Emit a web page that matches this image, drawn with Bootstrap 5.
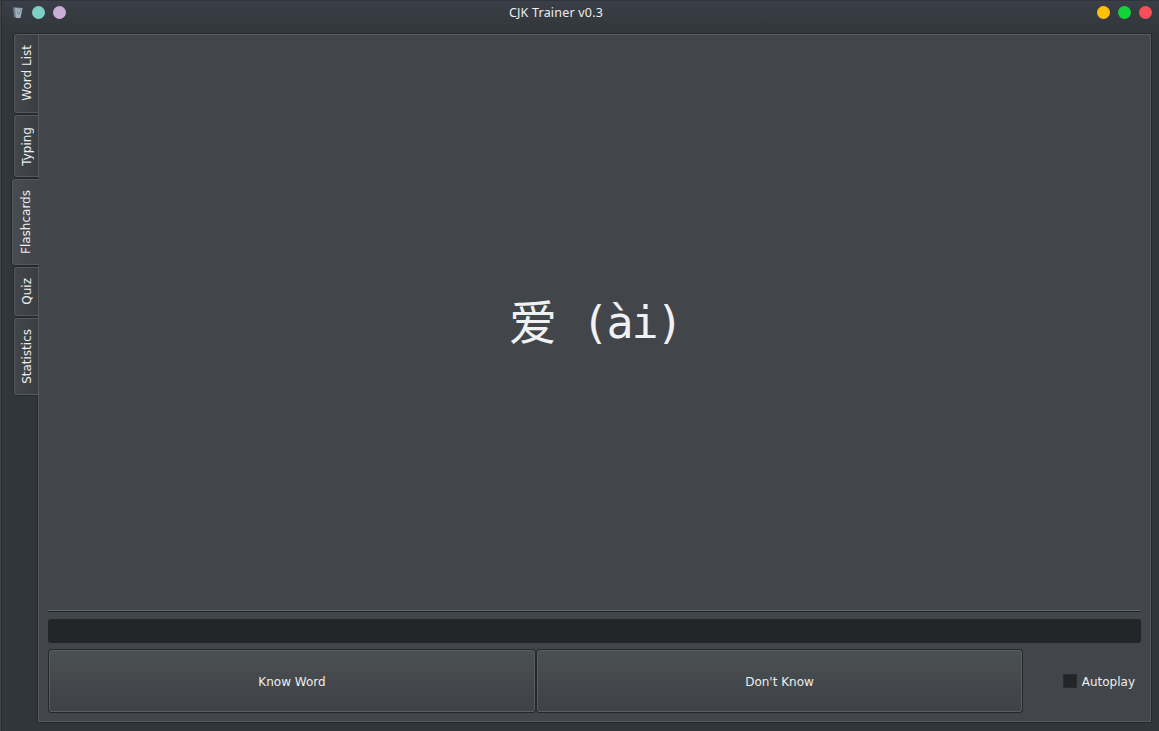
<!DOCTYPE html>
<html lang="en">
<head>
<meta charset="utf-8">
<meta name="viewport" content="width=device-width, initial-scale=1">
<title>CJK Trainer v0.3</title>
<link href="https://cdn.jsdelivr.net/npm/bootstrap@5.3.0/dist/css/bootstrap.min.css" rel="stylesheet">
<style>
body{height:100vh;background:#31363a linear-gradient(#3a3f48,#31363a) 0 0/100% 34px no-repeat;color:#eceeef;font:12px/16px "DejaVu Sans",sans-serif;border-left:1px solid #454545;box-shadow:inset 1px 0 #292d30}
.titlebar{height:25px;padding:0 7px 0 11px;border-top:1px solid #30343b}
.app-title{font:12.5px/20px "Noto Sans",sans-serif;letter-spacing:.2px;margin-left:-51px}
.dot{width:13px;height:13px;border-radius:50%;flex-shrink:0}
.workspace{padding:9px 8px 9px 11px}
.side-tabs{width:26px;z-index:1;gap:2px}
.side-tab{width:24px;margin-left:2px;border:1px solid #55595c;border-right:0;border-radius:3px 0 0 3px;background:linear-gradient(90deg,#42464a,#3a3e42);box-shadow:-1px 0 #262a2d,0 1px #262a2d,0 -1px #262a2d;color:#eceeef;padding:0;display:flex;align-items:center;justify-content:center}
.side-tab span{writing-mode:vertical-rl;transform:rotate(180deg);white-space:nowrap;line-height:16px;margin-left:1px}
.side-tab:first-child span{margin-bottom:1px}
.side-tab.active{width:27px;margin-left:0;background:linear-gradient(90deg,#474c50,#424549)}
.side-tab.active span{margin:0 1px 0 0}
.panel{border:1px solid #585c5f;background:#424549;box-shadow:0 0 0 1px #25292c;padding:0 9px 8px}
.word{font:48px/70px "Noto Sans CJK SC",sans-serif;color:#eff1f2;white-space:pre;padding:0 0 8px 1px}
.reading{font-family:"DejaVu Sans Mono",monospace;font-size:45px;letter-spacing:-2.3px;line-height:1;vertical-align:2px}
.divider{height:2px;background:#5d6c7b;border-bottom:1px solid #1e2328}
.answer{height:24px;border:0;border-radius:3px;background:#222628;margin:7px 0 6px;outline:0}
.choice{height:62px;border:1px solid #5a5e60;border-radius:3px;background:linear-gradient(#4b5053,#3e4145);box-shadow:0 0 0 1px #24282b;color:#eceeef;font-size:12px;padding:2px 0 0;width:485px}
.choice:first-child{width:486px}
.check{appearance:none;width:14px;height:14px;background:#222628;border:1px solid #292d2f;margin:0}
</style>
</head>
<body class="d-flex flex-column overflow-hidden">
<header class="titlebar d-flex align-items-center flex-shrink-0">
  <div class="d-flex align-items-center flex-shrink-0" style="margin-top:-1px">
    <svg width="12" height="13" viewBox="0 0 12 13"><path d="M1 1l3 1 1 10-3-1z" fill="#6f818d"/><path d="M3 1.5l7.500.5L8.500 12H4z" fill="#9eb1bd"/><path d="M6 3h3l-1 3H6zM5 7l3 1" fill="#c5d2dc" stroke="#607482" stroke-width=".7"/></svg>
    <span class="dot" style="background:#7ed0c7;margin-left:8px"></span>
    <span class="dot" style="background:#cbaed5;margin-left:8px"></span>
  </div>
  <div class="app-title flex-fill text-center">CJK Trainer v0.3</div>
  <div class="d-flex flex-shrink-0" style="gap:8px;margin-top:-1px">
    <span class="dot" style="background:#ffc107"></span><span class="dot" style="background:#12d438"></span><span class="dot" style="background:#f74e57"></span>
  </div>
</header>
<main class="workspace d-flex flex-fill">
  <nav class="side-tabs d-flex flex-column flex-shrink-0">
    <button class="side-tab" style="height:79px"><span>Word List</span></button>
    <button class="side-tab" style="height:62px"><span>Typing</span></button>
    <button class="side-tab active" style="height:86px"><span>Flashcards</span></button>
    <button class="side-tab" style="height:49px"><span>Quiz</span></button>
    <button class="side-tab" style="height:77px"><span>Statistics</span></button>
  </nav>
  <section class="panel d-flex flex-column flex-fill">
    <div class="word flex-fill d-flex align-items-center justify-content-center"><div>爱<span class="reading"> (ài)</span></div></div>
    <div class="divider"></div>
    <input class="answer w-100" aria-label="Answer">
    <div class="d-flex align-items-center">
      <div class="d-flex" style="gap:2px;padding:1px">
        <button class="choice">Know Word</button>
        <button class="choice">Don't Know</button>
      </div>
      <label class="d-flex align-items-center ms-auto" style="gap:5px;margin-right:6px"><input type="checkbox" class="check"><span style="padding-top:2px">Autoplay</span></label>
    </div>
  </section>
</main>
<script src="https://cdn.jsdelivr.net/npm/bootstrap@5.3.0/dist/js/bootstrap.bundle.min.js"></script>
</body>
</html>
